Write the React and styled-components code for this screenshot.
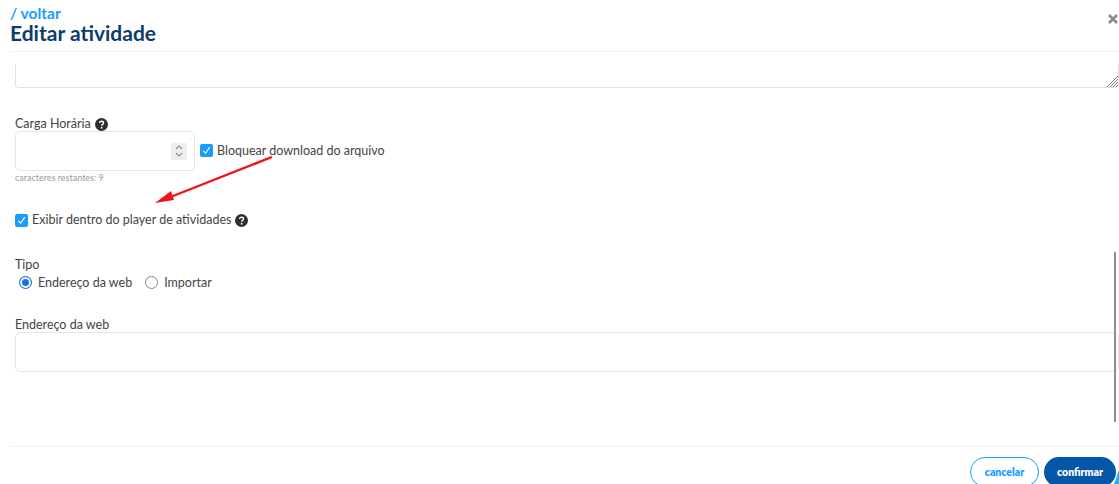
import React from "react";
import styled, { createGlobalStyle } from "styled-components";

const GlobalStyle = createGlobalStyle`
  html, body {
    margin: 0;
    padding: 0;
    background: #fff;
    overflow: hidden;
  }
  * {
    box-sizing: border-box;
  }
`;

const HelpIcon = ({ size = 13 }) => (
  <svg width={size} height={size} viewBox="0 0 16 16" style={{ flex: "none" }}>
    <circle cx="8" cy="8" r="8" fill="#2f2f33" />
    <path
      d="M5.6 6.2c0-1.4 1.1-2.2 2.5-2.2s2.4.8 2.4 2c0 1.9-2.3 1.8-2.3 3.5"
      fill="none"
      stroke="#fff"
      strokeWidth="1.7"
    />
    <circle cx="8.2" cy="12" r="1.1" fill="#fff" />
  </svg>
);

const App = () => {
  return (
    <Page>
      <GlobalStyle />
      <Header>
        <Back>/ voltar</Back>
        <Title>Editar atividade</Title>
        <Close>
          <svg width="10" height="10" viewBox="0 0 10 10">
            <path d="M1 1l8 8M9 1l-8 8" stroke="#8c8c8c" strokeWidth="2.6" />
          </svg>
        </Close>
      </Header>
      <Body>
        <TextArea>
          <Grip width="12" height="12" viewBox="0 0 12 12">
            <path
              d="M1 12L12 1M4 12l8-8M7 12l5-5M10 12l2-2"
              stroke="#777"
              strokeWidth="1"
            />
          </Grip>
        </TextArea>
        <HoursLabel>
          Carga Horária <HelpIcon />
        </HoursLabel>
        <HoursRow>
          <HoursInput>
            <Spinner>
              <svg width="10" height="14" viewBox="0 0 10 14">
                <path
                  d="M2 5l3-3 3 3M2 9l3 3 3-3"
                  fill="none"
                  stroke="#8a8a92"
                  strokeWidth="1.1"
                />
              </svg>
            </Spinner>
          </HoursInput>
          <CheckLabel>
            <Check />
            Bloquear download do arquivo
          </CheckLabel>
        </HoursRow>
        <Hint>caracteres restantes: 9</Hint>
        <PlayerRow>
          <Check />
          Exibir dentro do player de atividades
          <HelpIcon />
        </PlayerRow>
        <TypeLabel>Tipo</TypeLabel>
        <RadioRow>
          <RadioItem>
            <Radio $on />
            Endereço da web
          </RadioItem>
          <RadioItem>
            <Radio />
            Importar
          </RadioItem>
        </RadioRow>
        <WebLabel>Endereço da web</WebLabel>
        <WebInput />
      </Body>
      <Footer>
        <CancelButton>cancelar</CancelButton>
        <ConfirmButton>confirmar</ConfirmButton>
      </Footer>
      <ScrollThumb />
      <Corner />
      <Arrow width="125" height="50" viewBox="0 0 125 50">
        <path d="M117 1L13 42" stroke="#f01414" strokeWidth="2.4" />
        <path d="M0 47l16-12 3 9z" fill="#f01414" />
      </Arrow>
    </Page>
  );
};

const Page = styled.div`
  position: relative;
  width: 1119px;
  height: 484px;
  overflow: hidden;
  background: #fff;
  font-family: "Lato", "Liberation Sans", sans-serif;
  font-size: 12.5px;
  color: #444448;
`;

const Header = styled.header`
  position: relative;
  height: 52px;
  margin-left: 10px;
  padding: 5px 0 0;
  border-bottom: 1px solid #f0f0f0;
`;

const Back = styled.div`
  font-size: 15.5px;
  line-height: 16px;
  font-weight: 700;
  color: #1a9cff;
`;

const Title = styled.h1`
  margin: 0;
  font-size: 21px;
  line-height: 24px;
  font-weight: 700;
  color: #0c3c6e;
`;

const Close = styled.div`
  position: absolute;
  right: 1px;
  top: 14px;
  line-height: 0;
`;

const Body = styled.main`
  height: 394px;
  padding: 12px 0 0 15px;
  overflow: hidden;
`;

const TextArea = styled.div`
  position: relative;
  height: 24px;
  border: 1px solid #e2e2e2;
  border-top: none;
  border-radius: 0 0 4px 4px;
`;

const Grip = styled.svg`
  position: absolute;
  right: 0;
  bottom: 0;
`;

const HoursLabel = styled.div`
  display: flex;
  align-items: center;
  gap: 4px;
  height: 18px;
  margin-top: 27px;
  line-height: 18px;
`;

const HoursRow = styled.div`
  display: flex;
  align-items: center;
  gap: 5px;
  margin-top: -2px;
`;

const HoursInput = styled.div`
  display: flex;
  align-items: center;
  justify-content: flex-end;
  width: 180px;
  height: 40px;
  padding-right: 7px;
  border: 1px solid #e6e6e6;
  border-radius: 5px;
`;

const Spinner = styled.div`
  display: flex;
  align-items: center;
  justify-content: center;
  width: 16px;
  height: 17px;
  background: #eeeef1;
  border-radius: 2px;
`;

const CheckBox = styled.span`
  display: inline-flex;
  align-items: center;
  justify-content: center;
  flex: none;
  width: 13px;
  height: 13px;
  background: #1a9cff;
  border-radius: 2px;
`;

const Check = () => (
  <CheckBox>
    <svg width="9" height="9" viewBox="0 0 8 8">
      <path d="M1.2 4.4l2 2L6.9 1" fill="none" stroke="#fff" strokeWidth="1" />
    </svg>
  </CheckBox>
);

const CheckLabel = styled.label`
  display: flex;
  align-items: center;
  gap: 4px;
  margin-bottom: 2px;
`;

const Hint = styled.div`
  margin-top: 1px;
  font-size: 9px;
  line-height: 12px;
  color: #9a9a9a;
`;

const PlayerRow = styled.div`
  display: flex;
  align-items: center;
  gap: 4px;
  height: 18px;
  margin-top: 27px;
  line-height: 18px;
`;

const TypeLabel = styled.div`
  height: 17px;
  margin-top: 27px;
  line-height: 18px;
`;

const RadioRow = styled.div`
  display: flex;
  align-items: center;
  gap: 13px;
  height: 18px;
  padding-left: 4px;
`;

const RadioItem = styled.label`
  display: flex;
  align-items: center;
  gap: 6px;
`;

const Radio = styled.span`
  width: 13px;
  height: 13px;
  flex: none;
  border-radius: 50%;
  border: ${(p) => (p.$on ? "1.5px solid #1273de" : "1.5px solid #85858c")};
  background: ${(p) => (p.$on ? "#1273de" : "#fff")};
  box-shadow: ${(p) => (p.$on ? "inset 0 0 0 2px #fff" : "none")};
`;

const WebLabel = styled.div`
  margin-top: 25px;
  line-height: 18px;
`;

const WebInput = styled.div`
  height: 40px;
  margin-top: -2px;
  border: 1px solid #e6e6e6;
  border-radius: 5px;
`;

const Footer = styled.footer`
  display: flex;
  justify-content: flex-end;
  gap: 5px;
  height: 38px;
  margin-left: 10px;
  padding: 10px 3px 0 0;
  border-top: 1px solid #eeeeee;
`;

const PillButton = styled.button`
  width: 69px;
  height: 30px;
  padding: 0;
  border-radius: 15px;
  font-family: inherit;
  font-size: 10.5px;
  font-weight: 800;
`;

const CancelButton = styled(PillButton)`
  background: #fff;
  border: 1.5px solid #1a9cff;
  color: #1a9cff;
`;

const ConfirmButton = styled(PillButton)`
  width: 72px;
  background: #0456a8;
  border: none;
  color: #fff;
`;

const ScrollThumb = styled.div`
  position: absolute;
  left: 1114px;
  top: 252px;
  width: 2px;
  height: 170px;
  background: #8a8f9b;
`;

const Corner = styled.div`
  position: absolute;
  right: 0;
  bottom: 0;
  width: 5px;
  height: 14px;
  background: #27b5e8;
  clip-path: polygon(100% 0, 100% 100%, 0 100%);
`;

const Arrow = styled.svg`
  position: absolute;
  left: 155px;
  top: 156px;
`;

export default App;
